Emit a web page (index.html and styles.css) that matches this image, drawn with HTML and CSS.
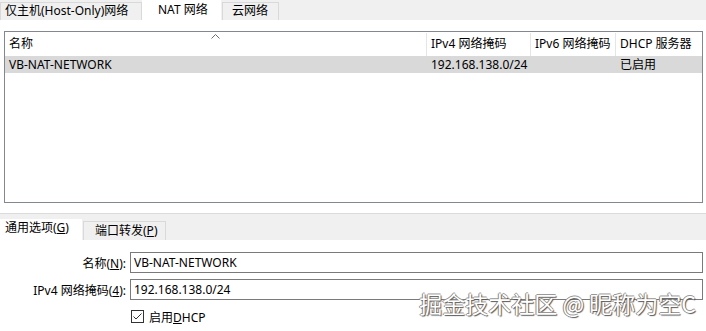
FILE: index.html
```html
<!DOCTYPE html>
<html>
<head>
  <title>NAT 网络</title>
  <link rel="stylesheet" href="styles.css">
</head>
<body>
  <div class="tabstrip">
    <div class="tab tab-host">仅主机(Host-Only)网络</div>
    <div class="tab active tab-nat">NAT 网络</div>
    <div class="tab tab-cloud">云网络</div>
  </div>

  <div class="panel top-panel">
    <div class="listbox">
      <div class="list-row list-head">
        <div class="col col-name">名称<span class="sort-arrow">
          <svg width="9" height="5" viewBox="0 0 9 5"><path d="M0.5 4.5 L4.5 0.5 L8.5 4.5" fill="none" stroke="#6d6d6d" stroke-width="1"/></svg>
        </span></div>
        <div class="col col-v4">IPv4 网络掩码</div>
        <div class="col col-v6">IPv6 网络掩码</div>
        <div class="col col-dhcp">DHCP 服务器</div>
      </div>
      <div class="list-row selected">
        <div class="col col-name">VB-NAT-NETWORK</div>
        <div class="col col-v4">192.168.138.0/24</div>
        <div class="col col-v6"></div>
        <div class="col col-dhcp">已启用</div>
      </div>
    </div>
  </div>

  <div class="tabstrip lower">
    <div class="tab active tab-general">通用选项(<u>G</u>)</div>
    <div class="tab tab-ports">端口转发(<u>P</u>)</div>
  </div>

  <div class="panel form-panel">
    <div class="form-row">
      <label class="form-label">名称(<u>N</u>):</label>
      <div class="field">VB-NAT-NETWORK</div>
    </div>
    <div class="form-row">
      <label class="form-label">IPv4 网络掩码(<u>4</u>):</label>
      <div class="field">192.168.138.0/24</div>
    </div>
    <div class="form-row check-row">
      <span class="checkbox">
        <svg width="13" height="13" viewBox="0 0 13 13">
          <rect x="0.5" y="0.5" width="12" height="12" fill="#fff" stroke="#333"/>
          <path d="M2.5 6.5 L5 9 L10.5 3.5" fill="none" stroke="#333" stroke-width="1"/>
        </svg>
      </span>
      <span>启用<u>D</u>HCP</span>
    </div>
    <div class="watermark">掘金技术社区 @ 昵称为空C</div>
  </div>
</body>
</html>
```

FILE: styles.css
```css
/* dialog look, Windows style */
body {
  margin: 0;
  padding: 0;
  width: 706px;
  height: 331px;
  overflow: hidden;
  background-color: #ffffff;
  font-family: "Noto Sans", "Noto Sans CJK SC", sans-serif;
  font-size: 12px;
  color: #000;
}

.tabstrip {
  display: flex;
  height: 20px;
  background-color: #f0f0f0;
}

.tab {
  box-sizing: border-box;
  height: 18px;
  margin-top: 2px;
  padding-left: 4px;
  line-height: 16px;
  background-color: #f0f0f0;
  border: 1px solid #d9d9d9;
  border-bottom: none;
  margin-right: 1px;
  white-space: nowrap;
}

.tab.active {
  height: 20px;
  margin-top: 0;
  line-height: 20px;
  background-color: #fff;
  border: none;
}

.tab-host {
  width: 142px;
}

.tab-nat {
  width: 79px;
  margin-left: -1px;
  padding-left: 16px;
}

.tab-cloud {
  width: 57px;
  padding-left: 9px;
}

.top-panel {
  height: 193px;
  padding: 11px 3px 0 4px;
  box-sizing: border-box;
}

.listbox {
  height: 172px;
  border: 1px solid #828790;
  background-color: #fff;
  box-sizing: border-box;
}

.list-row {
  display: flex;
  height: 17px;
  line-height: 17px;
}

.list-head {
  height: 23px;
  line-height: 22px;
  padding-top: 1px;
}

.list-head .col {
  border-right: 1px solid #e5e5e5;
}

.list-head .col-dhcp {
  border-right: none;
}

.selected {
  background-color: #d9d9d9;
}

.col {
  box-sizing: border-box;
  padding-left: 4px;
  white-space: nowrap;
  overflow: hidden;
}

.col-name {
  width: 422px;
  position: relative;
}

.col-v4 {
  width: 104px;
}

.col-v6 {
  width: 85px;
}

.col-dhcp {
  width: 86px;
}

.sort-arrow {
  position: absolute;
  left: 206px;
  top: -9px;
}

.lower {
  height: 27px;
  padding-top: 6px;
  box-sizing: border-box;
  border-top: 1px solid #dcdcdc;
  align-items: flex-end;
}

.lower .tab {
  height: 19px;
  line-height: 18px;
}

.lower .tab.active {
  height: 21px;
  line-height: 18px;
}

.tab-general {
  width: 82px;
  padding-left: 5px;
}

.tab-ports {
  width: 83px;
  padding-left: 11px;
}

.form-panel {
  position: relative;
  height: 91px;
  padding-top: 12px;
  box-sizing: border-box;
}

.form-row {
  display: flex;
  align-items: center;
  height: 21px;
  margin-bottom: 6px;
}

.form-label {
  width: 130px;
  text-align: right;
  padding-right: 4px;
  box-sizing: border-box;
  color: #000;
}

.field {
  box-sizing: border-box;
  width: 573px;
  height: 21px;
  line-height: 19px;
  border: 1px solid #7a7a7a;
  padding-left: 3px;
}

.check-row {
  padding-left: 131px;
  margin-top: 1px;
}

.checkbox {
  display: flex;
  margin-right: 5px;
}

.watermark {
  position: absolute;
  right: 10px;
  top: 46px;
  font-family: "Noto Sans CJK SC", sans-serif;
  font-size: 23px;
  color: #ffffff;
  text-shadow: 1px 1px 1px #555, -1px 0 0 #888, 0 -1px 0 #999;
  white-space: nowrap;
}
```
